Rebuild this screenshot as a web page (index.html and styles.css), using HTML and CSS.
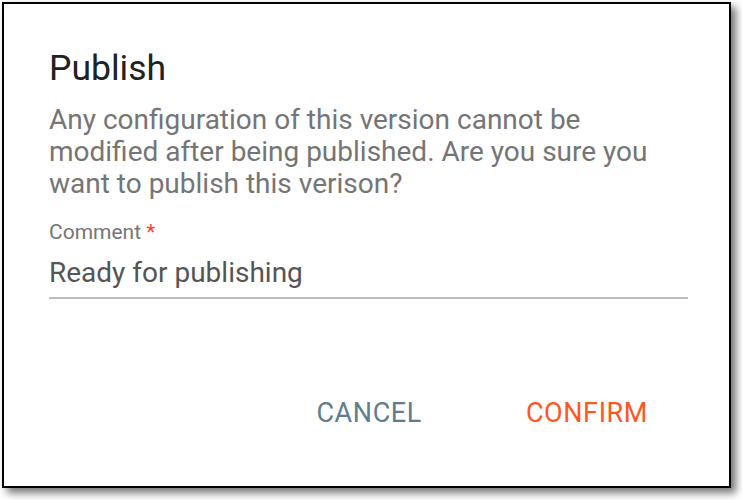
FILE: index.html
```html
<!DOCTYPE html>
<html lang="en">
<head>
<meta charset="utf-8">
<title>Publish</title>
<link rel="stylesheet" href="styles.css">
</head>
<body>
<div class="dialog">
  <h2 class="title">Publish</h2>
  <p class="message">Any configuration of this version cannot be modified after being published. Are you sure you want to publish this verison?</p>
  <div class="field">
    <label class="label">Comment <span class="req">*</span></label>
    <div class="input">Ready for publishing</div>
  </div>
  <div class="actions">
    <button class="btn btn-cancel">Cancel</button>
    <button class="btn btn-confirm">Confirm</button>
  </div>
</div>
</body>
</html>
```
FILE: styles.css
```css
html, body {
  margin: 0;
  background: #ffffff;
}
body {
  padding: 2px 11px 12px 2px;
  font-family: Roboto, "Liberation Sans", sans-serif;
}
.dialog {
  border: 2px solid #000;
  background: #fff;
  box-shadow: 5px 5px 8px rgba(0, 0, 0, 0.55);
  padding: 0 41px 0 45px;
  box-sizing: border-box;
  width: 729px;
  height: 486px;
  display: flex;
  flex-direction: column;
}
.title {
  margin: 44px 0 0;
  font-size: 35.5px;
  line-height: 40px;
  font-weight: 400;
  color: #212121;
}
.message {
  margin: 16px 0 0;
  font-size: 28px;
  line-height: 32px;
  color: #757575;
}
.field {
  margin-top: 20px;
  display: flex;
  flex-direction: column;
}
.label {
  font-size: 21px;
  line-height: 24px;
  color: #757575;
}
.req {
  color: #f44336;
}
.input {
  margin-top: 13px;
  font-size: 28px;
  line-height: 32px;
  color: #555;
  padding-bottom: 8px;
  border-bottom: 2px solid #bdbdbd;
}
.actions {
  margin-top: 98px;
  display: flex;
  justify-content: flex-end;
  gap: 104px;
  padding-right: 40px;
}
.btn {
  background: none;
  border: 0;
  padding: 0;
  font-family: Roboto, "Liberation Sans", sans-serif;
  font-size: 27px;
  line-height: 32px;
  text-transform: uppercase;
  letter-spacing: 0.6px;
}
.btn-cancel { color: #607d8b; }
.btn-confirm { color: #ff5722; }
```
